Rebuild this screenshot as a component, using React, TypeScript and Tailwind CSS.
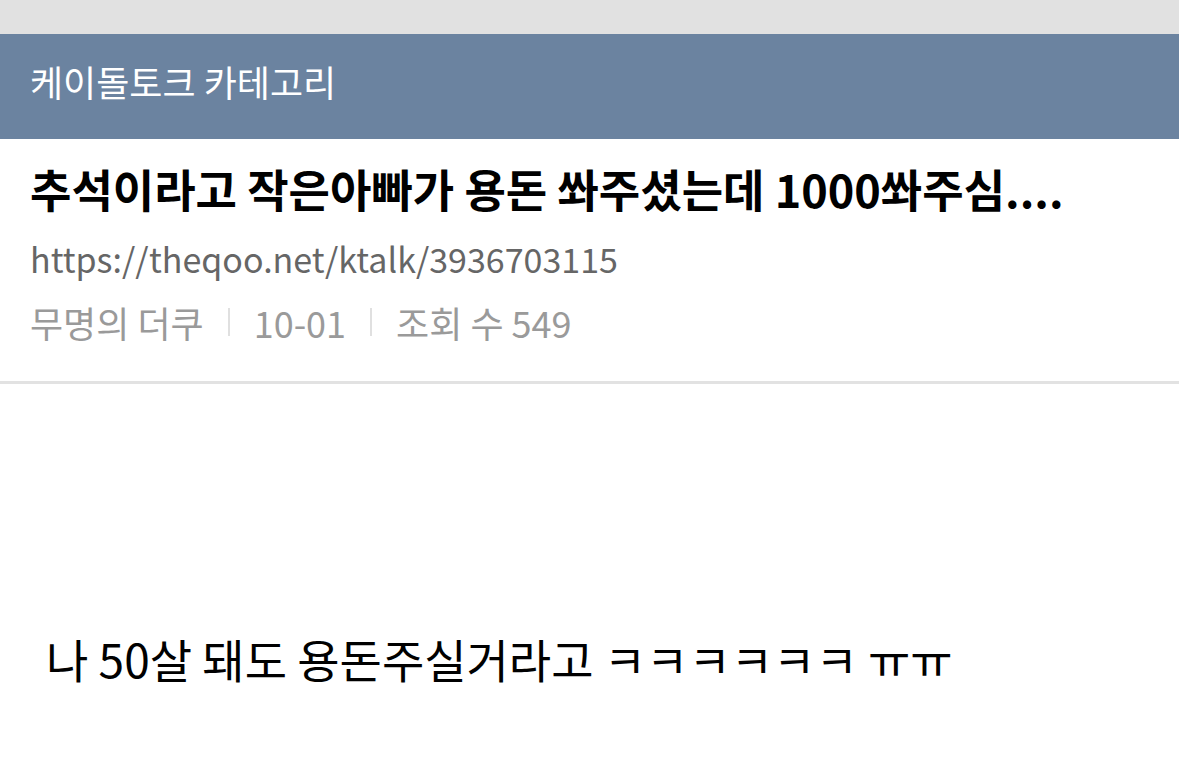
export default function App() {
  const font = { fontFamily: '"Noto Sans CJK KR", "Noto Sans", sans-serif' };
  return (
    <div className="min-h-[784px] w-[1179px] bg-white" style={font}>
      <div className="h-[34px] bg-[#e1e1e1]" />
      <header className="flex h-[105px] items-center bg-[#6b83a0] px-[30px] pb-[12px]">
        <h1 className="text-[36px] font-normal leading-[48px] text-white">케이돌토크 카테고리</h1>
      </header>
      <section className="border-b-[3px] border-[#e2e2e2] px-[30px] pb-[37px] pt-[22px]">
        <h2 className="whitespace-nowrap text-[45px] font-bold leading-[56px] text-black">
          추석이라고 작은아빠가 용돈 쏴주셨는데 1000쏴주심....
        </h2>
        <p className="mt-[20px] text-[34px] leading-[44px] text-[#666]">https://theqoo.net/ktalk/3936703115</p>
        <div className="mt-[19px] flex items-center text-[36px] leading-[44px] text-[#9a9a9a]">
          <span>무명의 더쿠</span>
          <span className="mx-[24px] h-[28px] w-[2px] bg-[#e0e0e0]" />
          <span>10-01</span>
          <span className="mx-[24px] h-[28px] w-[2px] bg-[#e0e0e0]" />
          <span>조회 수 549</span>
        </div>
      </section>
      <article className="px-[46px] pt-[246px]">
        <p className="text-[46px] leading-[56px] text-black">나 50살 돼도 용돈주실거라고 ㅋㅋㅋㅋㅋㅋ ㅠㅠ</p>
      </article>
    </div>
  );
}
